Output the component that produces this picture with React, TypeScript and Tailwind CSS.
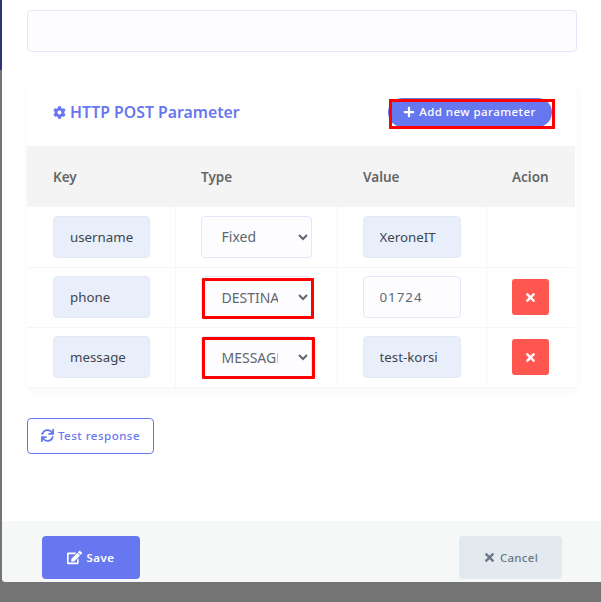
import React from "react"
import { FaCog, FaEdit, FaPlus, FaSync, FaTimes } from "react-icons/fa"

type Row = {
  name: string
  type: string
  value: string
  valueDisabled: boolean
  removable: boolean
  mark: string
}

const rows: Row[] = [
  { name: "username", type: "Fixed", value: "XeroneIT", valueDisabled: true, removable: false, mark: "" },
  { name: "phone", type: "DESTINATION", value: "01724", valueDisabled: false, removable: true, mark: "top-[2px] w-[112px] h-[41px]" },
  { name: "message", type: "MESSAGE", value: "test-korsi", valueDisabled: true, removable: true, mark: "top-[1px] w-[113px] h-[42px]" },
]

const inputBase = "h-[42px] rounded-[4px] border px-[16px] text-[13.3px] outline-none"

const App: React.FC = () => {
  return (
    <div className="flex w-[601px] h-[602px] overflow-hidden bg-[#747474] font-['Noto_Sans',sans-serif]">
      <div className="flex flex-col w-[2px] shrink-0">
        <div className="h-[70px] bg-[#2f3478]" />
      </div>
      <div className="flex flex-col w-[599px] h-[582px] bg-white rounded-bl-[4px] overflow-hidden">
        <div className="flex-1 pl-[25px] pr-[24px] pt-[10px]">
          <div className="h-[42px] rounded-[4px] border border-[#e4e6fc] bg-[#fdfdff]" />

          <div className="mt-[28px] bg-white shadow-[0_4px_8px_rgba(0,0,0,0.03)]">
            <div className="flex items-center justify-between h-[66px] pl-[26px] pr-[25px]">
              <h4 className="flex items-center gap-[4px] -mt-[1px] text-[15.8px] font-semibold text-[#6777ef]">
                <FaCog className="w-[13px] h-[13px]" />
                HTTP POST Parameter
              </h4>
              <div className="relative -mt-[2px]">
                <button className="flex items-center justify-center gap-[4px] pr-[1px] w-[164px] h-[29px] rounded-[30px] bg-[#6777ef] text-white text-[11.5px] font-medium tracking-[0.45px]">
                  <FaPlus className="w-[12px] h-[12px]" />
                  Add new parameter
                </button>
                <div className="absolute left-[1px] top-[1px] w-[166px] h-[30px] border-[3px] border-[#f00]" />
              </div>
            </div>

            <table className="w-[548px] table-fixed border-collapse">
              <colgroup>
                <col className="w-[148px]" />
                <col className="w-[162px]" />
                <col className="w-[149px]" />
                <col className="w-[89px]" />
              </colgroup>
              <thead>
                <tr className="h-[61px] bg-[#f4f4f4] text-left text-[13.5px] text-[#666]">
                  <th className="pl-[26px] pt-[2px] font-semibold">Key</th>
                  <th className="pl-[26px] pt-[2px] font-semibold">Type</th>
                  <th className="pl-[26px] pt-[2px] font-semibold">Value</th>
                  <th className="pl-[26px] pt-[2px] font-semibold">Acion</th>
                </tr>
              </thead>
              <tbody>
                {rows.map((row) => (
                  <tr key={row.name} className="h-[60px] border-b border-[#f6f6f8]">
                    <td className="pl-[26px] border-r border-[#f6f6f8]">
                      <input
                        readOnly
                        value={row.name}
                        className={`${inputBase} w-[97px] border-[#e4e9f8] bg-[#e9eefb] text-[#3c4650]`}
                      />
                    </td>
                    <td className="pl-[25px] border-r border-[#f6f6f8]">
                      <div className="relative w-[111px]">
                        <select
                          value={row.type}
                          onChange={() => {}}
                          className="h-[42px] w-[111px] rounded-[4px] border pl-[16px] pr-[17px] text-[14px] outline-none border-[#e4e6fc] bg-[#fdfdff] text-[#5f6770]"
                        >
                          <option value="Fixed">Fixed</option>
                          <option value="DESTINATION">DESTINATION</option>
                          <option value="MESSAGE">MESSAGE</option>
                        </select>
                        {row.mark && (
                          <div className={`absolute left-[1px] border-[3px] rounded-[1px] border-[#f00] ${row.mark}`} />
                        )}
                      </div>
                    </td>
                    <td className="pl-[25px] border-r border-[#f6f6f8]">
                      <input
                        readOnly
                        value={row.value}
                        className={
                          row.valueDisabled
                            ? `${inputBase} w-[98px] border-[#e4e9f8] bg-[#e9eefb] text-[#3c4650]`
                            : `${inputBase} w-[98px] border-[#e4e6fc] bg-[#fdfdff] text-[#5f6770] tracking-[1px]`
                        }
                      />
                    </td>
                    <td className="pl-[25px]">
                      {row.removable && (
                        <button className="flex items-center justify-center w-[37px] h-[36px] rounded-[3px] bg-[#ff5650] text-white">
                          <FaTimes className="w-[13px] h-[13px]" />
                        </button>
                      )}
                    </td>
                  </tr>
                ))}
              </tbody>
            </table>
          </div>

          <button className="flex items-center justify-center gap-[4px] mt-[30px] w-[127px] h-[36px] rounded-[4px] border border-[#6777ef] bg-white text-[11.5px] font-medium text-[#6777ef] tracking-[0.5px]">
            <FaSync className="w-[13px] h-[13px]" />
            Test response
          </button>
        </div>

        <div className="flex justify-between h-[61px] pl-[40px] pr-[39px] pt-[15px] bg-[#f6f8f8]">
          <button className="flex items-center justify-center gap-[4px] w-[98px] h-[43px] rounded-[4px] bg-[#6777ef] text-white text-[11.5px] font-semibold tracking-[0.5px]">
            <FaEdit className="w-[15px] h-[15px]" />
            Save
          </button>
          <button className="flex items-center justify-center gap-[4px] w-[103px] h-[43px] rounded-[4px] bg-[#e3eaef] text-[#6a7888] text-[11.5px] font-medium tracking-[0.3px]">
            <FaTimes className="w-[13px] h-[13px]" />
            Cancel
          </button>
        </div>
      </div>
    </div>
  )
}

export default App
